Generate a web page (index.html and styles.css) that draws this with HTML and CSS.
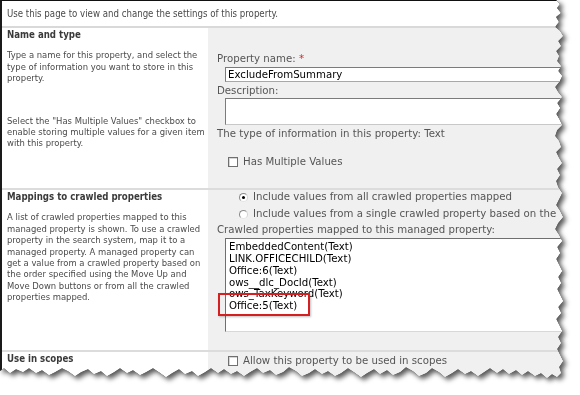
FILE: index.html
```html
<!DOCTYPE html>
<html lang="en">
<head>
<meta charset="utf-8">
<title>Managed property settings</title>
<link rel="stylesheet" href="styles.css">
</head>
<body>
<div class="sheet">
  <div class="page">
    <p class="intro">Use this page to view and change the settings of this property.</p>

    <section class="row row-name">
      <div class="desc">
        <h3>Name and type</h3>
        <p>Type a name for this property, and select the<br>type of information you want to store in this<br>property.</p>
        <p class="gap">Select the "Has Multiple Values" checkbox to<br>enable storing multiple values for a given item<br>with this property.</p>
      </div>
      <div class="ctl">
        <div class="label">Property name: <span class="req">*</span></div>
        <div class="input">ExcludeFromSummary</div>
        <div class="label label-desc">Description:</div>
        <div class="textarea"></div>
        <div class="info">The type of information in this property: Text</div>
        <div class="check"><span class="box"></span>Has Multiple Values</div>
      </div>
    </section>

    <section class="row row-map">
      <div class="desc">
        <h3>Mappings to crawled properties</h3>
        <p>A list of crawled properties mapped to this<br>managed property is shown. To use a crawled<br>property in the search system, map it to a<br>managed property. A managed property can<br>get a value from a crawled property based on<br>the order specified using the Move Up and<br>Move Down buttons or from all the crawled<br>properties mapped.</p>
      </div>
      <div class="ctl">
        <div class="radio"><span class="dot on"></span>Include values from all crawled properties mapped</div>
        <div class="radio radio-2"><span class="dot"></span>Include values from a single crawled property based on the</div>
        <div class="label label-list">Crawled properties mapped to this managed property:</div>
        <div class="listbox">
          <div>EmbeddedContent(Text)</div>
          <div>LINK.OFFICECHILD(Text)</div>
          <div>Office:6(Text)</div>
          <div>ows__dlc_DocId(Text)</div>
          <div>ows_TaxKeyword(Text)</div>
          <div>Office:5(Text)</div>
          <span class="mark"></span>
        </div>
      </div>
    </section>

    <section class="row row-scope">
      <div class="desc">
        <h3>Use in scopes</h3>
      </div>
      <div class="ctl">
        <div class="check"><span class="box"></span>Allow this property to be used in scopes</div>
      </div>
    </section>
  </div>
</div>
</body>
</html>
```

FILE: styles.css
```css
* { box-sizing: border-box; margin: 0; padding: 0; }

html, body { background: #fff; }
body { margin: 0; overflow: hidden; }

.sheet {
  width: 580px;
  height: 395px;
  filter: drop-shadow(0 0 0.6px #000) drop-shadow(3px 3px 2.5px rgba(0, 0, 0, 0.65));
}

.page {
  width: 580px;
  height: 390px;
  background: #fff;
  border-top: 1px solid #111;
  border-left: 2px solid #1a1a1a;
  font-family: "DejaVu Sans Condensed", "DejaVu Sans", sans-serif;
  font-size: 9.4px;
  line-height: 11.4px;
  color: #4a4a4a;
  clip-path: polygon(
    0 0, 556px 0, 560px 4px, 557px 8px, 561px 13px, 556px 17px, 559px 22px, 555px 27px,
    560px 31px, 563px 36px, 558px 41px, 561px 46px, 556px 51px, 559px 56px, 557px 61px,
    561px 66px, 558px 71px, 562px 76px, 559px 82px, 555px 87px, 558px 92px, 562px 97px,
    557px 103px, 560px 108px, 556px 114px, 559px 119px, 562px 125px, 557px 130px,
    555px 136px, 559px 141px, 561px 147px, 556px 152px, 559px 158px, 562px 163px,
    557px 169px, 560px 175px, 556px 181px, 558px 187px, 562px 193px, 559px 199px,
    556px 205px, 560px 211px, 563px 217px, 558px 223px, 555px 229px, 559px 235px,
    562px 241px, 557px 247px, 560px 253px, 556px 259px, 559px 265px, 562px 271px,
    558px 277px, 561px 283px, 557px 289px, 560px 295px, 563px 301px, 558px 307px,
    561px 313px, 556px 319px, 559px 325px, 562px 331px, 558px 337px, 561px 343px,
    557px 349px, 560px 355px, 563px 361px, 559px 367px, 561px 373px, 557px 377px,
    552px 374px, 547px 378px, 541px 373px, 535px 376px, 528px 371px, 522px 375px,
    516px 370px, 509px 374px, 503px 369px, 497px 373px, 490px 368px, 484px 372px,
    478px 376px, 471px 371px, 465px 374px, 458px 369px, 452px 373px, 445px 377px,
    439px 372px, 432px 368px, 426px 373px, 419px 376px, 413px 371px, 406px 367px,
    400px 372px, 393px 375px, 387px 370px, 380px 374px, 374px 369px, 367px 373px,
    361px 377px, 354px 372px, 348px 368px, 341px 373px, 335px 376px, 328px 371px,
    322px 374px, 315px 369px, 309px 373px, 302px 376px, 296px 371px, 289px 367px,
    283px 372px, 276px 375px, 270px 370px, 263px 373px, 257px 368px, 250px 372px,
    244px 376px, 237px 371px, 231px 374px, 224px 369px, 218px 373px, 211px 368px,
    205px 372px, 198px 376px, 192px 371px, 185px 374px, 179px 369px, 172px 373px,
    166px 377px, 159px 372px, 153px 368px, 146px 372px, 140px 375px, 133px 370px,
    127px 373px, 120px 368px, 114px 372px, 107px 376px, 101px 371px, 94px 374px,
    88px 369px, 81px 372px, 75px 376px, 68px 371px, 62px 368px, 55px 372px,
    49px 375px, 42px 370px, 36px 373px, 29px 368px, 23px 372px, 16px 369px,
    10px 373px, 4px 368px, 0 371px
  );
}

.intro {
  padding: 7px 5px 7px;
  border-bottom: 2px solid #d9d9d9;
  font-size: 9.6px;
  white-space: nowrap;
}

.row {
  display: grid;
  grid-template-columns: 206px 1fr;
  border-bottom: 2px solid #dcdcdc;
}

.row-scope { min-height: 40px; border-bottom: 0; }

.desc {
  background: #fff;
  padding: 1px 5px 0;
  white-space: nowrap;
}

.desc h3 {
  font-size: 9.6px;
  font-weight: bold;
  line-height: 12px;
  color: #3a3a3a;
}

.desc p { margin-top: 8px; }
.desc p.gap { margin-top: 31px; }

.ctl {
  background: #f0f0f0;
  padding: 25px 0 20px 9px;
  font-family: "DejaVu Sans", sans-serif;
  font-size: 10.2px;
  line-height: 12px;
  color: #555;
  white-space: nowrap;
}

.row-map .ctl { padding: 1px 0 18px 9px; }
.row-scope .ctl { padding: 3px 0 0 9px; }

.req { color: #e02020; }

.input {
  margin: 2px 0 0 8px;
  height: 15px;
  background: #fff;
  border: 1px solid;
  border-color: #7b7b7b #c8c8c8 #a8a8a8 #7b7b7b;
  padding: 0 2px;
  line-height: 13px;
  color: #000;
}

.label-desc { margin-top: 3px; }

.textarea {
  margin: 1px 0 0 8px;
  height: 27px;
  background: #fff;
  border: 1px solid;
  border-color: #7b7b7b #c8c8c8 #c8c8c8 #7b7b7b;
}

.info { margin-top: 3px; }

.check {
  display: flex;
  align-items: center;
  margin-top: 16px;
  padding-left: 11px;
  height: 12px;
}

.row-scope .check { margin-top: 0; }

.box {
  width: 10px;
  height: 10px;
  margin-right: 5px;
  background: #fff;
  border: 1px solid #6f6f6f;
  box-shadow: inset 1px 1px 0 #d6d6d6;
}

.radio {
  display: flex;
  align-items: center;
  padding-left: 22px;
  height: 12px;
}

.radio-2 { margin-top: 5px; }

.dot {
  position: relative;
  width: 9px;
  height: 9px;
  margin-right: 5px;
  border-radius: 50%;
  background: #fff;
  border: 1px solid;
  border-color: #8a8a8a #d4d4d4 #e6e6e6 #8a8a8a;
}

.dot.on::after {
  content: "";
  position: absolute;
  left: 2px;
  top: 2px;
  width: 3px;
  height: 3px;
  border-radius: 50%;
  background: #000;
}

.label-list { margin-top: 4px; }

.listbox {
  position: relative;
  margin: 2px 0 0 8px;
  height: 94px;
  background: #fff;
  border: 1px solid;
  border-color: #6f6f6f #d8d8d8 #d8d8d8 #6f6f6f;
  padding: 2px 3px 0;
  line-height: 11.7px;
  color: #000;
}

.mark {
  position: absolute;
  left: -8px;
  top: 54px;
  width: 92px;
  height: 23px;
  border: 2px solid #d42020;
  box-shadow: 1px 1px 2px rgba(0, 0, 0, 0.25);
}
```
